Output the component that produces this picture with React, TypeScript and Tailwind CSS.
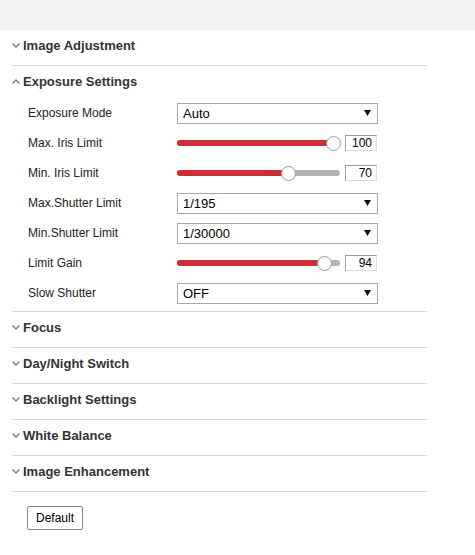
import React from 'react';

const font = { fontFamily: '"Liberation Sans", Arial, sans-serif' };

function Chevron({ up }: { up?: boolean }) {
  return (
    <svg width="8" height="5" viewBox="0 0 8 5" className="shrink-0">
      <polyline
        points={up ? '0.5,4.5 4,1 7.5,4.5' : '0.5,0.5 4,4 7.5,0.5'}
        fill="none"
        stroke="#777"
        strokeWidth="1.3"
      />
    </svg>
  );
}

function Header({ title, open }: { title: string; open?: boolean }) {
  return (
    <div className={`flex items-center gap-[3px] ${open ? 'h-[32px] pb-[2px]' : 'h-[36px] pb-[5px] border-b border-[#d9d9d9]'}`}>
      <Chevron up={open} />
      <span className="text-[13px] font-bold text-[#333] leading-none">{title}</span>
    </div>
  );
}

function Select({ value }: { value: string }) {
  return (
    <div className="w-[201px] h-[21px] border border-[#a9a9a9] bg-white flex items-center justify-between pl-[5px] pr-[6px]">
      <span className="text-[13px] text-black leading-none">{value}</span>
      <svg width="7" height="6" viewBox="0 0 7 6">
        <polygon points="0,0 7,0 3.5,6" fill="#111" />
      </svg>
    </div>
  );
}

function Slider({ value }: { value: number }) {
  const pos = 7 + (value / 100) * 149;
  return (
    <div className="flex items-center">
      <div className="relative w-[163px] h-[16px] flex items-center">
        <div className="w-full h-[6px] rounded-full bg-[#b3b3b3]" />
        <div className="absolute left-0 h-[6px] rounded-full bg-[#ce2f36]" style={{ width: pos }} />
        <div
          className="absolute w-[15px] h-[15px] rounded-full bg-white border border-[#9a9a9a]"
          style={{ left: pos - 7.5 }}
        />
      </div>
      <div className="ml-[5px] w-[32px] h-[16px] border border-[#9a9a9a] border-r-[#dcdcdc] border-b-[#dcdcdc] flex items-center justify-end pr-[4px]">
        <span className="text-[12px] text-[#001] leading-none">{value}</span>
      </div>
    </div>
  );
}

const rows: { label: string; kind: 'select' | 'slider'; value: string | number }[] = [
  { label: 'Exposure Mode', kind: 'select', value: 'Auto' },
  { label: 'Max. Iris Limit', kind: 'slider', value: 100 },
  { label: 'Min. Iris Limit', kind: 'slider', value: 70 },
  { label: 'Max.Shutter Limit', kind: 'select', value: '1/195' },
  { label: 'Min.Shutter Limit', kind: 'select', value: '1/30000' },
  { label: 'Limit Gain', kind: 'slider', value: 94 },
  { label: 'Slow Shutter', kind: 'select', value: 'OFF' },
];

export default function App() {
  return (
    <div className="w-[475px] h-[555px] bg-white" style={font}>
      <div className="h-[30px] bg-[#f2f2f2]" />
      <div className="ml-[12px] w-[415px]">
        <Header title="Image Adjustment" />
        <div className="border-b border-[#d9d9d9] pb-[3px]">
          <Header title="Exposure Settings" open />
          {rows.map(r => (
            <div key={r.label} className="h-[30px] flex items-center">
              <span className="w-[165px] pl-[16px] text-[12px] text-[#222] leading-none">{r.label}</span>
              {r.kind === 'select' ? <Select value={r.value as string} /> : <Slider value={r.value as number} />}
            </div>
          ))}
        </div>
        <Header title="Focus" />
        <Header title="Day/Night Switch" />
        <Header title="Backlight Settings" />
        <Header title="White Balance" />
        <Header title="Image Enhancement" />
        <div className="pt-[13px] pl-[15px]">
          <button className="w-[56px] h-[24px] border border-[#8a8a8a] rounded-[2px] bg-white text-[12px] text-black">
            Default
          </button>
        </div>
      </div>
    </div>
  );
}
